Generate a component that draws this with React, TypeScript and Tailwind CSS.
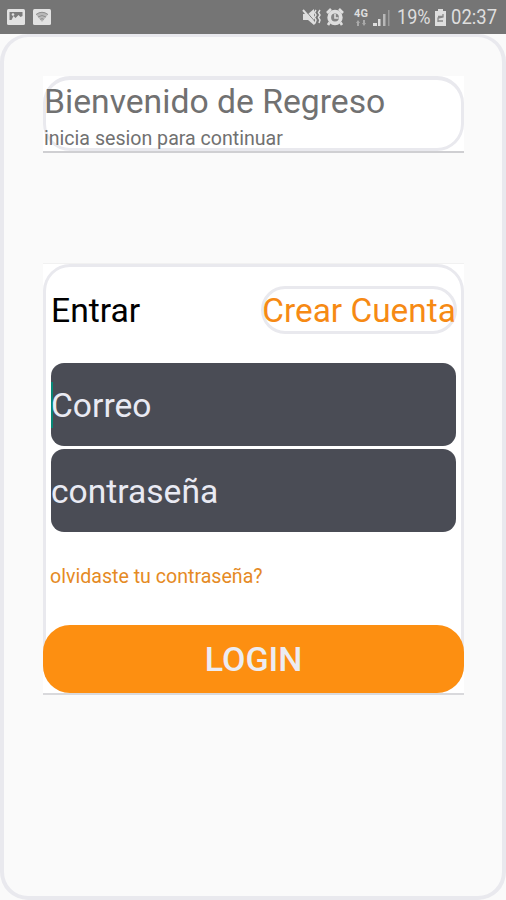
const StatusBar = () => {
  return (
    <header className="flex h-[34px] items-center justify-between bg-[#757575] pl-[7px] pr-[8px] text-[#dedede]">
      <div className="flex gap-[8px]">
        <svg width="18" height="16" viewBox="0 0 18 16">
          <rect width="18" height="16" rx="1.5" fill="#e2e2e2" />
          <path d="M2.5 3h13v4l-2 1-2-2-3 3-2-2-2 4H2.5z" fill="#7c7c7c" />
          <circle cx="6" cy="5.5" r="1.3" fill="#e2e2e2" />
        </svg>
        <svg width="18" height="16" viewBox="0 0 18 16">
          <rect width="18" height="16" rx="1.5" fill="#e2e2e2" />
          <path d="M3 5.5Q9 1 15 5.5L9 13z" fill="#b8b8b8" />
          <path d="M3 5.5Q9 1 15 5.5M5 8Q9 5 13 8M7.3 10.3Q9 9 10.7 10.3" fill="none" stroke="#8d8d8d" strokeWidth="1" />
        </svg>
      </div>

      <div className="flex items-center">
        {/* Muted with vibration */}
        <svg width="20" height="18" viewBox="0 0 20 18" className="mr-[4px]">
          <path d="M1 6h5l6-5v16l-6-5H1z" fill="#dedede" />
          <path d="M3 2l11 13" stroke="#757575" strokeWidth="1" />
          <path d="M1 2l12 14" stroke="#dedede" strokeWidth="2" />
          <path d="M14 2l-1.5 2.5L14 7l-1.5 2.5L14 12l-1 3M18 2l-1.5 2.5L18 7l-1.5 2.5L18 12l-1 3" fill="none" stroke="#dedede" strokeWidth="1.5" />
        </svg>
        {/* Alarm */}
        <svg width="18" height="18" viewBox="0 0 18 18" className="mr-[9px]">
          <circle cx="9" cy="9.5" r="5.8" fill="#858585" stroke="#dedede" strokeWidth="3.8" />
          <path d="M1 5l4-4M17 5l-4-4M3.5 14.5L2 17M14.5 14.5L16 17" stroke="#dedede" strokeWidth="2.6" />
          <path d="M9 6v4h3.5" fill="none" stroke="#dedede" strokeWidth="1.6" />
        </svg>
        <div className="mr-[4px] flex w-[16px] flex-col items-center">
          <span className="text-[11px] leading-[9px] font-bold">4G</span>
          <svg width="10" height="6" viewBox="0 0 10 6" className="mt-[2px]">
            <path d="M0 3l2-3 2 3H3v3H1V3zM6 3h1V0h2v3h1L8 6z" fill="#a9a9a9" />
          </svg>
        </div>
        <svg width="18" height="17" viewBox="0 0 18 17" className="mr-[6px]">
          <path d="M0 14h4v3H0zM5 10h2.5v7H5z" fill="#dedede" />
          <path d="M10 5h2.5v12H10z" fill="#b8b8b8" />
          <path d="M15 1h1.5v16H15z" fill="#9a9a9a" />
        </svg>
        <span className="mr-[4px] w-[34px] origin-left scale-x-[0.86] text-[21px] leading-[26px] whitespace-nowrap">19%</span>
        <svg width="11" height="17" viewBox="0 0 11 17" className="mr-[5px]">
          <path d="M3 0h5v2h3v15H0V2h3z" fill="#dedede" />
          <path d="M3 7.5h5M8 5v3L3 9v4M3 12h5" fill="none" stroke="#888888" strokeWidth="1.3" />
        </svg>
        <span className="w-[47px] origin-left scale-x-[0.88] text-[21px] leading-[26px] whitespace-nowrap">02:37</span>
      </div>
    </header>
  );
};

const Field = ({ label, active }: { label: string; active?: boolean }) => {
  return (
    <div className="flex h-[83px] w-[405px] items-center overflow-hidden rounded-[13px] bg-[#4a4c55]">
      {active && <span className="-mr-[2px] h-[46px] w-[2px] bg-[#078675]" />}
      <span className="pt-[3px] text-[33.6px] leading-[40px] text-[#e9eaf3]">{label}</span>
    </div>
  );
};

const App = () => {
  return (
    <div className="flex h-[900px] w-[506px] flex-col overflow-hidden bg-[#fafafa] font-[Roboto,sans-serif]">
      <StatusBar />

      <main className="flex flex-1 flex-col rounded-[28px] border-[4px] border-t-[3px] border-[#e9e9ee] pt-[39px] pl-[39px]">
        {/* Welcome card */}
        <section className="h-[77px] w-[421px] border-b-2 border-[#cfcfd2] bg-white">
          <div className="h-[75px] rounded-[27px] border-[3px] border-t-[4px] border-[#e9e9ee]">
            <h1 className="-ml-[2px] mt-[2px] text-[33.7px] leading-[40px] whitespace-nowrap text-[#717171]">Bienvenido de Regreso</h1>
            <p className="-ml-[2px] text-[19.6px] leading-[34px] whitespace-nowrap text-[#717171]">inicia sesion para continuar</p>
          </div>
        </section>

        {/* Login card */}
        <section className="mt-[110px] h-[432px] w-[421px] border-t border-b-2 border-t-[#f1f1f1] border-b-[#d9d9dc] bg-white">
          <div className="flex h-[429px] flex-col rounded-[27px] border-[3px] border-b-0 border-[#e9e9ee]">
            <div className="mt-[19px] flex items-center justify-between pl-[5px] pr-[4px]">
              <span className="pt-[2px] text-[33.7px] leading-[46px] text-black">Entrar</span>
              <button className="flex h-[48px] w-[196px] items-center justify-center rounded-full border-[3px] border-[#e9e9ee] pt-[2px] text-[33.4px] whitespace-nowrap text-[#f68a14]">
                Crear Cuenta
              </button>
            </div>
            <div className="mt-[29px] ml-[5px] flex flex-col gap-[3px]">
              <Field label="Correo" active />
              <Field label="contraseña" />
            </div>
            <a className="mt-[33px] ml-[4px] text-[19.6px] leading-[24px] text-[#e58a24]">olvidaste tu contraseña?</a>
            <button className="mt-auto -ml-[3px] h-[68px] w-[421px] shrink-0 rounded-[27px] bg-[#fd8f11] pt-[1px] text-[34px] font-medium text-[#ececf2]">
              LOGIN
            </button>
          </div>
        </section>
      </main>
    </div>
  );
};

export default App;
